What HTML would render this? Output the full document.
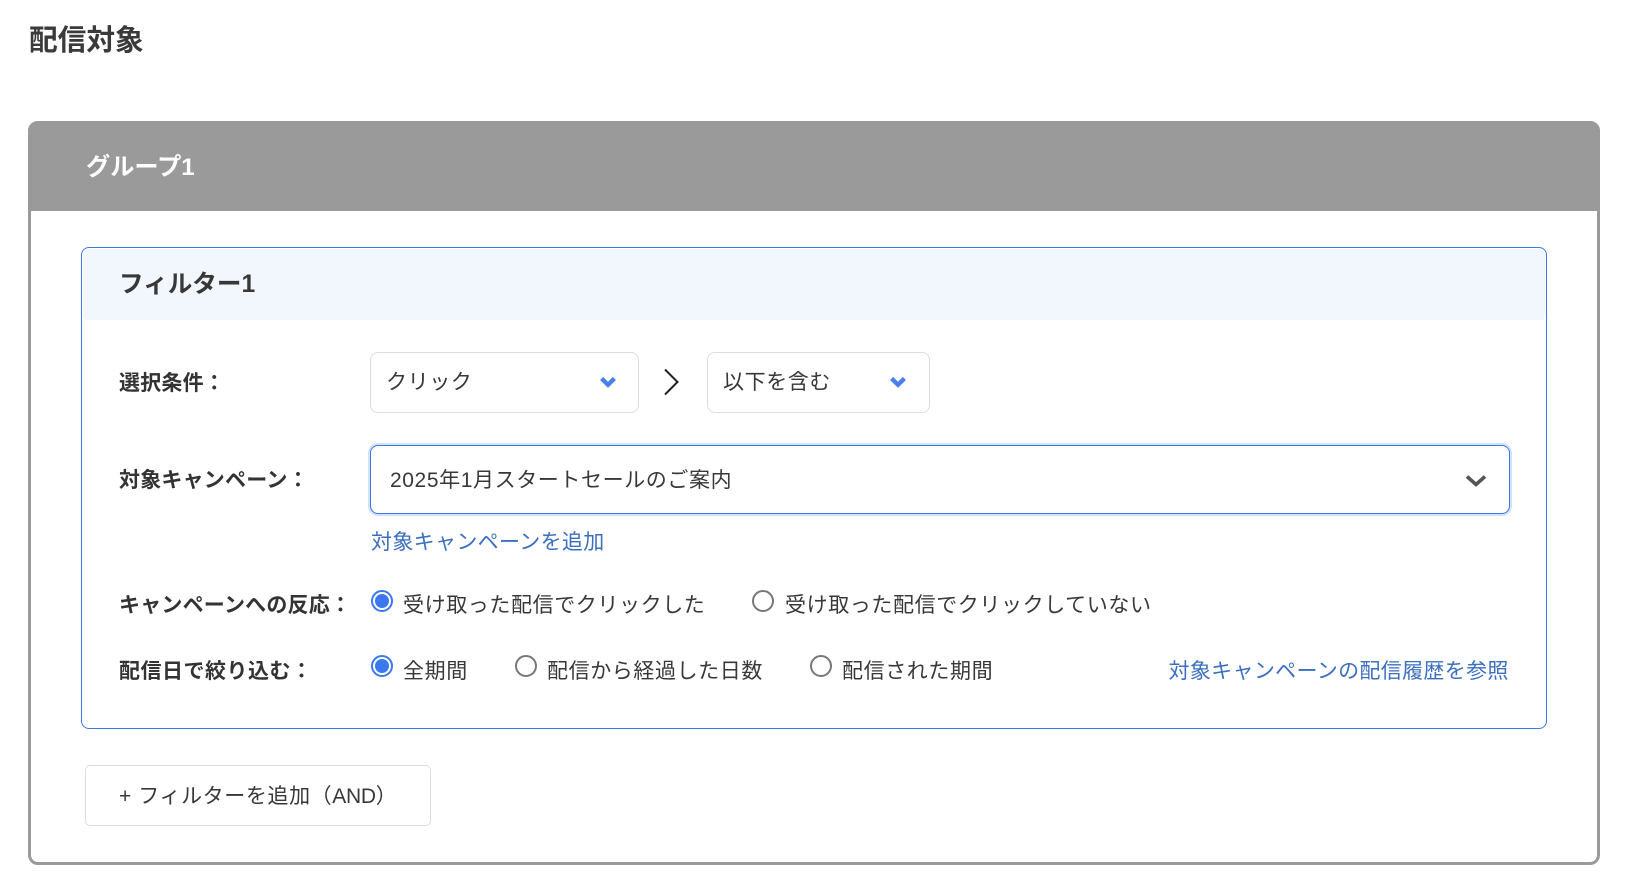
<!DOCTYPE html>
<html lang="ja"><head><meta charset="utf-8"><title>配信対象</title>
<style>
html,body{margin:0;padding:0;background:#fff}
body{width:1632px;height:896px;position:relative;overflow:hidden;font-family:"Liberation Sans","Noto Sans CJK JP",sans-serif;color:#383838;font-size:21px}
.a{position:absolute;white-space:nowrap;line-height:30px;height:30px}
.b{position:absolute;box-sizing:border-box}
.t{letter-spacing:.6px}
.l{font-weight:700;letter-spacing:.2px;color:#333}
.lk{color:#3b6fbf;letter-spacing:.33px}
.r{position:absolute;box-sizing:border-box;width:22px;height:22px;border-radius:50%;border:2px solid #777;background:#fff}
.r.on{border-color:#3b78f0;}
.r.on:after{content:"";position:absolute;left:2px;top:2px;width:14px;height:14px;border-radius:50%;background:#3b78f0}
.sel{border:1.5px solid #ddd;border-radius:8px;background:#fff}
svg{position:absolute;overflow:visible}
</style></head><body>
<div class="a" style="left:29px;top:26px;font-size:28.7px;font-weight:700;color:#3a3a3a">配信対象</div>

<div class="b" style="left:28px;top:121px;width:1572px;height:744px;border:3px solid #9a9a9a;border-radius:10px;background:#fff"></div>
<div class="b" style="left:28px;top:121px;width:1572px;height:90px;background:#9a9a9a;border-radius:10px 10px 0 0"></div>
<div class="a" style="left:86px;top:153px;font-size:24.2px;font-weight:700;color:#fff">グループ1</div>

<div class="b" style="left:81px;top:247px;width:1466px;height:482px;border:1.5px solid #3b78e7;border-radius:8px;background:#fff"></div>
<div class="b" style="left:83px;top:249px;width:1462px;height:71px;background:#f2f6fd;border-radius:7px 7px 4px 4px"></div>
<div class="a" style="left:119px;top:270px;font-size:24.6px;font-weight:700">フィルター1</div>

<div class="a l" style="left:119px;top:369px">選択条件：</div>
<div class="b sel" style="left:370px;top:352px;width:269px;height:61px"></div>
<div class="a t" style="left:386px;top:368px">クリック</div>
<svg style="left:599.5px;top:376px" width="16" height="12" viewBox="0 0 16 12"><path d="M1.6 2.5L8 8.8L14.4 2.5" fill="none" stroke="#4a80ea" stroke-width="4.4"/></svg>
<svg style="left:663px;top:368px" width="16" height="28" viewBox="0 0 16 28"><path d="M2 1.5L14.5 14L2 26.5" fill="none" stroke="#222" stroke-width="2"/></svg>
<div class="b sel" style="left:707px;top:352px;width:223px;height:61px"></div>
<div class="a t" style="left:723px;top:368px">以下を含む</div>
<svg style="left:890px;top:376px" width="16" height="12" viewBox="0 0 16 12"><path d="M1.6 2.5L8 8.8L14.4 2.5" fill="none" stroke="#4a80ea" stroke-width="4.4"/></svg>

<div class="a l" style="left:119px;top:466px">対象キャンペーン：</div>
<div class="b" style="left:370px;top:445px;width:1140px;height:69px;border:1.5px solid #3b78e7;border-radius:8px;background:#fff;box-shadow:0 0 0 2px #d3e2fa"></div>
<div class="a t" style="left:390px;top:466px">2025年1月スタートセールのご案内</div>
<svg style="left:1465px;top:474px" width="22" height="13" viewBox="0 0 22 13"><path d="M2 2.5L11 10.5L20 2.5" fill="none" stroke="#555" stroke-width="3.6"/></svg>
<div class="a lk" style="left:371px;top:527.5px">対象キャンペーンを追加</div>

<div class="a l" style="left:119px;top:591px">キャンペーンへの反応：</div>
<div class="r on" style="left:371px;top:589.5px"></div>
<div class="a t" style="left:403px;top:591px">受け取った配信でクリックした</div>
<div class="r" style="left:752px;top:589.5px"></div>
<div class="a t" style="left:785px;top:591px">受け取った配信でクリックしていない</div>

<div class="a l" style="left:119px;top:657px;letter-spacing:.5px">配信日で絞り込む：</div>
<div class="r on" style="left:371px;top:655px"></div>
<div class="a t" style="left:403px;top:657px">全期間</div>
<div class="r" style="left:515px;top:655px"></div>
<div class="a t" style="left:547px;top:657px">配信から経過した日数</div>
<div class="r" style="left:809.5px;top:655px"></div>
<div class="a t" style="left:842px;top:657px">配信された期間</div>
<div class="a lk" style="left:1168.5px;top:657px">対象キャンペーンの配信履歴を参照</div>

<div class="b sel" style="left:85px;top:765px;width:346px;height:61px;border-radius:5px"></div>
<div class="a t" style="left:119px;top:782px">+ フィルターを追加（<span style="letter-spacing:-.3px">AND</span>）</div>
</body></html>
